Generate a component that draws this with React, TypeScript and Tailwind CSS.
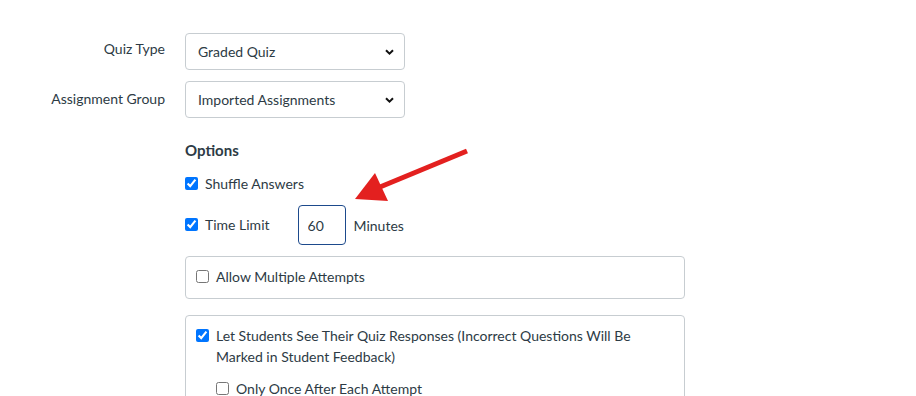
import { useState } from "react";

const font = { fontFamily: "Lato, 'Open Sans', sans-serif" };

function Chevron() {
  return (
    <svg
      className="pointer-events-none absolute right-[11px] top-1/2 -translate-y-1/2"
      width="9"
      height="6"
      viewBox="0 0 9 6"
    >
      <path d="M1 1.2 L4.5 4.6 L8 1.2" fill="none" stroke="#111" strokeWidth="2" />
    </svg>
  );
}

function SelectBox({ value, options }: { value: string; options: string[] }) {
  return (
    <div className="relative w-[220px]">
      <select
        defaultValue={value}
        className="h-[37px] w-full appearance-none rounded-[4px] border border-[#c7cdd1] bg-white pl-[12px] pr-8 text-[14px] text-[#2d3b45]"
        style={font}
      >
        {options.map((o) => (
          <option key={o}>{o}</option>
        ))}
      </select>
      <Chevron />
    </div>
  );
}

export default function App() {
  const [minutes, setMinutes] = useState("60");

  return (
    <div className="relative h-[396px] w-[916px] overflow-hidden bg-white text-[14px] text-[#2d3b45]" style={font}>
      <div className="pt-[33px]">
        {/* Quiz settings rows */}
        <div className="flex items-center gap-[20px]">
          <label className="w-[165px] -mt-[6px] text-right">Quiz Type</label>
          <SelectBox value="Graded Quiz" options={["Graded Quiz", "Practice Quiz", "Graded Survey", "Ungraded Survey"]} />
        </div>
        <div className="mt-[11px] flex items-center gap-[20px]">
          <label className="w-[165px] -mt-[2px] text-right">Assignment Group</label>
          <SelectBox value="Imported Assignments" options={["Imported Assignments", "Assignments", "Quizzes"]} />
        </div>

        {/* Options */}
        <div className="ml-[185px] w-[500px]">
          <h3 className="mt-[22px] text-[15px] font-bold leading-[20px] text-[#2d3b45]">Options</h3>

          <label className="mt-[13px] flex h-[20px] items-center gap-[7px]">
            <input type="checkbox" defaultChecked className="h-[13px] w-[13px]" />
            <span>Shuffle Answers</span>
          </label>

          <div className="mt-[12px] flex items-center">
            <label className="flex items-center gap-[7px]">
              <input type="checkbox" defaultChecked className="-mt-[1px] h-[13px] w-[13px]" />
              <span className="-mt-[2px]">Time Limit</span>
            </label>
            <input
              value={minutes}
              onChange={(e) => setMinutes(e.target.value)}
              className="ml-[28px] h-[40px] w-[48px] rounded-[4px] border border-[#1d4a8c] pl-[9px] text-[14px] text-[#2d3b45] outline-none"
              style={font}
            />
            <span className="ml-[8px]">Minutes</span>
          </div>

          <div className="mt-[11px] flex h-[43px] items-center rounded-[4px] border border-[#c7cdd1] px-[10px]">
            <label className="-mt-[2px] flex items-center gap-[7px]">
              <input type="checkbox" className="h-[13px] w-[13px]" />
              <span>Allow Multiple Attempts</span>
            </label>
          </div>

          <div className="mt-[16px] rounded-[4px] border border-[#c7cdd1] px-[10px] pt-[9px] pb-4">
            <label className="flex items-start gap-[7px] leading-[21px]">
              <input type="checkbox" defaultChecked className="mt-[4px] h-[13px] w-[13px] shrink-0" />
              <span>Let Students See Their Quiz Responses (Incorrect Questions Will Be Marked in Student Feedback)</span>
            </label>
            <label className="ml-[20px] mt-[11px] flex items-center gap-[7px]">
              <input type="checkbox" className="h-[13px] w-[13px]" />
              <span>Only Once After Each Attempt</span>
            </label>
          </div>
        </div>
      </div>

      {/* red annotation arrow */}
      <svg className="pointer-events-none absolute left-0 top-0" width="916" height="396">
        <line x1="467" y1="151" x2="380" y2="187" stroke="#e3201f" strokeWidth="5" />
        <polygon points="355,199 375,173 388,201" fill="#e3201f" />
      </svg>
    </div>
  );
}
